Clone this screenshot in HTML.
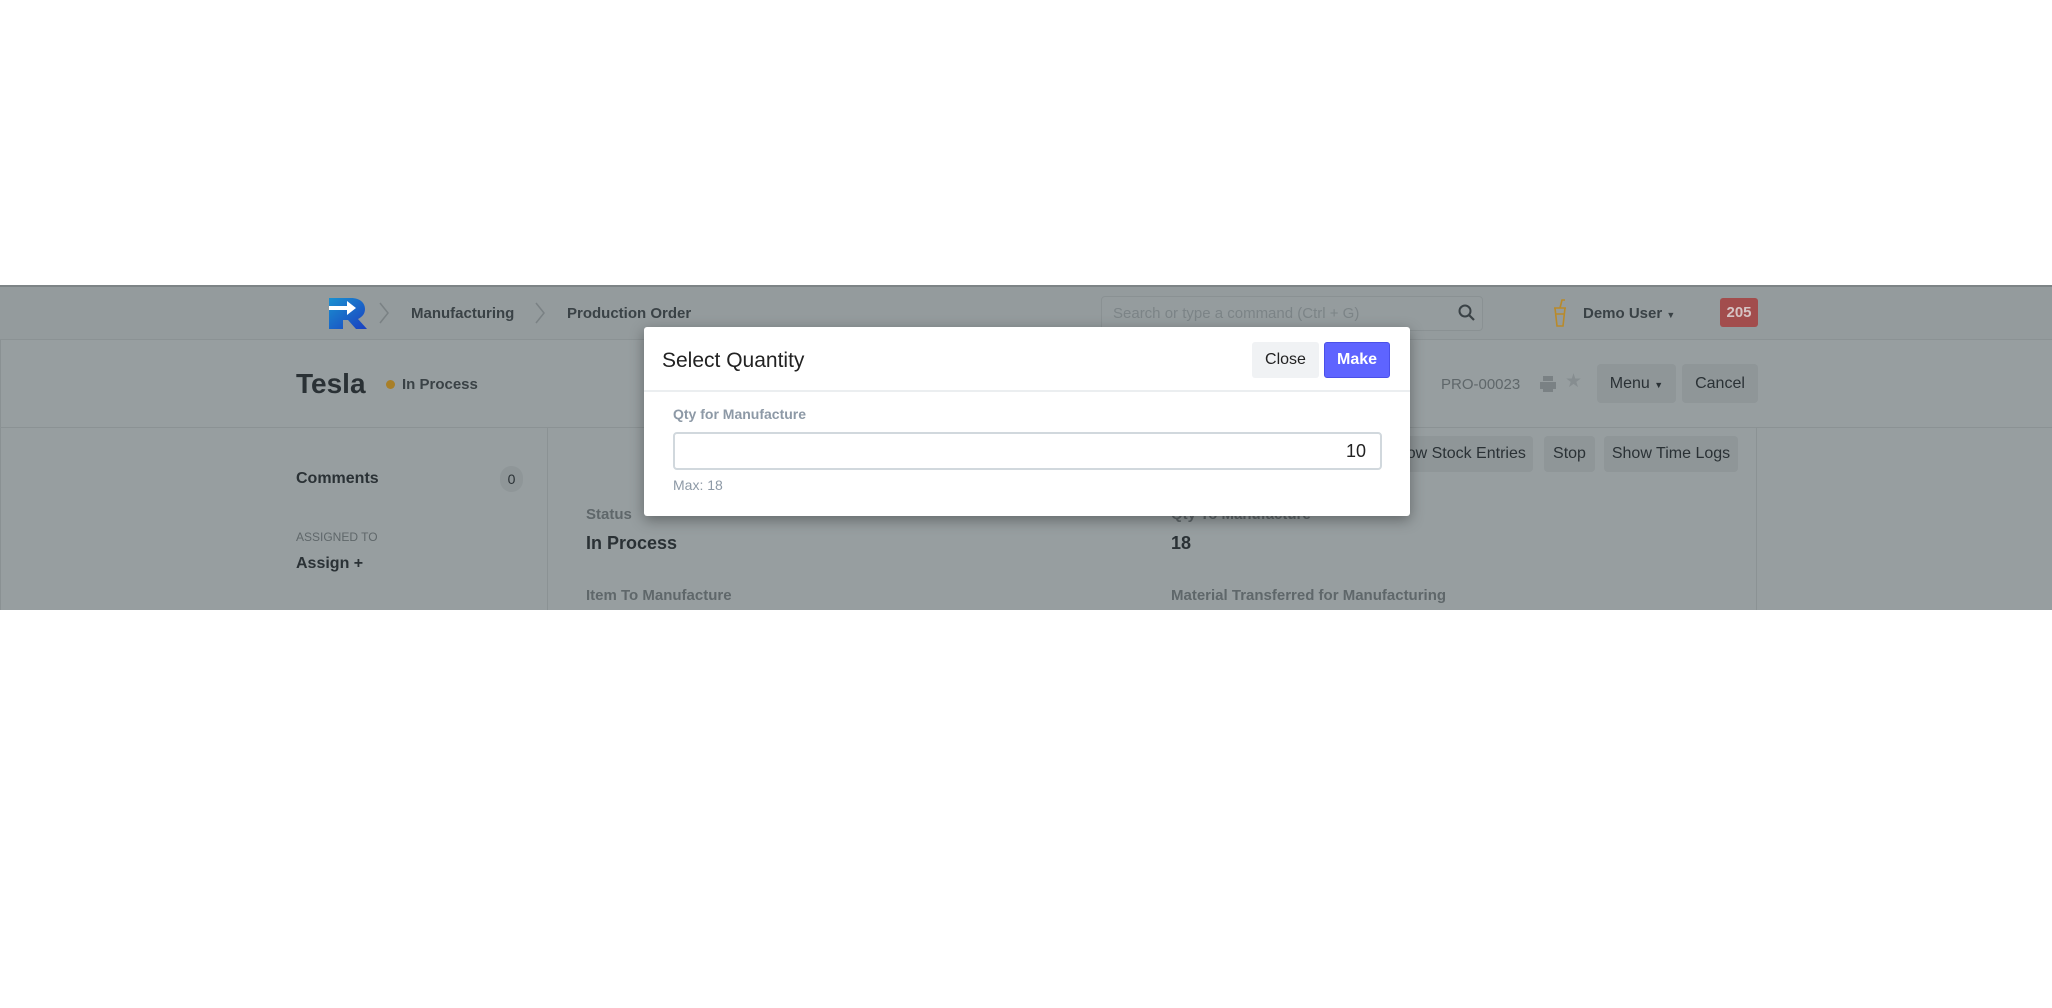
<!DOCTYPE html>
<html><head><meta charset="utf-8"><style>
*{box-sizing:border-box;margin:0;padding:0}
body{width:2052px;height:1008px;background:#fff;position:relative;font-family:"Liberation Sans",sans-serif;overflow:hidden}
.a{position:absolute;white-space:nowrap}
.band{position:absolute;left:0;top:285px;width:2052px;height:325px;background:#979ea0;border-top:2px solid #7d8486;border-left:1px solid #8a9193}
.nav{position:absolute;left:0;top:285px;width:2052px;height:55px;background:#949b9d;border-bottom:1px solid #8b9294;border-top:2px solid #7d8486}
.d{color:#2a3135;font-weight:bold}
.g{color:#5f676a;font-weight:bold}
.btn{position:absolute;background:#8f9698;border-radius:4px;color:#2a3135;font-size:16px;text-align:center}
</style></head><body>
<div class="band"></div>
<div class="nav"></div>
<div class="a" style="left:0;top:427px;width:2052px;height:1px;background:#8b9294"></div>
<div class="a" style="left:547px;top:428px;width:1px;height:182px;background:#8b9294"></div>
<div class="a" style="left:1756px;top:428px;width:1px;height:182px;background:#8b9294"></div>
<svg class="a" style="left:328px;top:297px" width="40" height="32" viewBox="0 0 40 32"><defs><linearGradient id="lg" x1="0" y1="0" x2="1" y2="1"><stop offset="0" stop-color="#1a90d0"/><stop offset="1" stop-color="#1a3fc0"/></linearGradient></defs><path d="M1 1h22c9 0 14 5 14 11 0 5-3 8-7 10l9 10h-11l-8-9h-5v9H1z" fill="url(#lg)"/><path d="M1 9h18V4l9 7-9 7v-5H1z" fill="#fff"/></svg>
<svg class="a" style="left:378px;top:302px" width="12" height="22"><path d="M2 1l8 10-8 10" stroke="#7a8184" stroke-width="1.5" fill="none"/></svg>
<div class="a d" style="left:411px;top:305px;font-size:15px;color:#3a4246">Manufacturing</div>
<svg class="a" style="left:534px;top:302px" width="12" height="22"><path d="M2 1l8 10-8 10" stroke="#7a8184" stroke-width="1.5" fill="none"/></svg>
<div class="a d" style="left:567px;top:305px;font-size:15px;color:#3a4246">Production Order</div>
<div class="a" style="left:1101px;top:296px;width:382px;height:35px;border:1px solid #8a9193;border-radius:4px;background:#959c9e"></div>
<div class="a" style="left:1113px;top:305px;font-size:15px;color:#7c8487">Search or type a command (Ctrl + G)</div>
<svg class="a" style="left:1458px;top:304px" width="18" height="18"><circle cx="7" cy="7" r="5.5" stroke="#3a4246" stroke-width="2" fill="none"/><path d="M11 11l5 5" stroke="#3a4246" stroke-width="2.2"/></svg>
<svg class="a" style="left:1552px;top:298px" width="16" height="30"><path d="M3 10h10l-2 18H5z M2 10h12 M3 16h10 M8 10l2-8h3" stroke="#b98a2a" stroke-width="1.6" fill="none"/></svg>
<div class="a d" style="left:1583px;top:305px;font-size:15px;color:#3a4246">Demo User <span style="font-size:9px">▼</span></div>
<div class="a" style="left:1720px;top:298px;width:38px;height:29px;background:#a24d4d;border-radius:3px;color:#d6c4c4;font-weight:bold;font-size:15px;text-align:center;line-height:29px">205</div>
<div class="a d" style="left:296px;top:368px;font-size:28px">Tesla</div>
<div class="a" style="left:386px;top:380px;width:9px;height:9px;border-radius:50%;background:#a87f28"></div>
<div class="a d" style="left:402px;top:376px;font-size:15px;color:#3a4246">In Process</div>
<div class="a" style="left:1441px;top:376px;font-size:15px;color:#5f676a">PRO-00023</div>
<svg class="a" style="left:1539px;top:375px" width="18" height="18"><path d="M4 1h10v5H4z M1 7h16v7H1z M4 12h10v5H4z" fill="#7a8184"/></svg>
<div class="a" style="left:1565px;top:370px;font-size:19px;color:#868d90">★</div>
<div class="btn" style="left:1597px;top:364px;width:79px;height:39px;line-height:39px">Menu <span style="font-size:9px">▼</span></div>
<div class="btn" style="left:1682px;top:364px;width:76px;height:39px;line-height:39px">Cancel</div>
<div class="a d" style="left:296px;top:470px;font-size:16px">Comments</div>
<div class="a" style="left:500px;top:466px;width:23px;height:26px;border-radius:12px;background:#8f9698;color:#2a3135;font-size:14px;text-align:center;line-height:26px">0</div>
<div class="a g" style="left:296px;top:530px;font-size:12px;font-weight:normal">ASSIGNED TO</div>
<div class="a d" style="left:296px;top:555px;font-size:16px">Assign +</div>
<div class="btn" style="left:1380px;top:436px;width:153px;height:36px;line-height:36px">Show Stock Entries</div>
<div class="btn" style="left:1544px;top:436px;width:51px;height:36px;line-height:36px">Stop</div>
<div class="btn" style="left:1604px;top:436px;width:134px;height:36px;line-height:36px">Show Time Logs</div>
<div class="a g" style="left:586px;top:506px;font-size:15px">Status</div>
<div class="a d" style="left:586px;top:533px;font-size:18px">In Process</div>
<div class="a g" style="left:586px;top:587px;font-size:15px">Item To Manufacture</div>
<div class="a g" style="left:1171px;top:506px;font-size:15px">Qty To Manufacture</div>
<div class="a d" style="left:1171px;top:533px;font-size:18px">18</div>
<div class="a g" style="left:1171px;top:587px;font-size:15px">Material Transferred for Manufacturing</div>
<div class="a" style="left:644px;top:327px;width:766px;height:189px;background:#fff;border-radius:3px;box-shadow:0 4px 14px rgba(0,0,0,.35)">
 <div class="a" style="left:18px;top:22px;font-size:21px;color:#222">Select Quantity</div>
 <div class="a" style="left:608px;top:15px;width:67px;height:36px;background:#f0f2f4;border-radius:3px;font-size:16px;line-height:36px;text-align:center;color:#222">Close</div>
 <div class="a" style="left:680px;top:15px;width:66px;height:36px;background:#5e64ff;border:1px solid #4a50e8;border-radius:3px;font-size:16px;line-height:34px;text-align:center;color:#fff;font-weight:bold">Make</div>
 <div class="a" style="left:0;top:63px;width:766px;height:2px;background:#ebeef0"></div>
 <div class="a" style="left:29px;top:79px;font-size:14px;font-weight:bold;color:#8d99a6">Qty for Manufacture</div>
 <div class="a" style="left:29px;top:105px;width:709px;height:38px;border:2px solid #d1d8dd;border-radius:4px;font-size:18px;color:#222;text-align:right;padding-right:14px;line-height:34px">10</div>
 <div class="a" style="left:29px;top:150px;font-size:14px;color:#8d99a6">Max: 18</div>
</div>
</body></html>
